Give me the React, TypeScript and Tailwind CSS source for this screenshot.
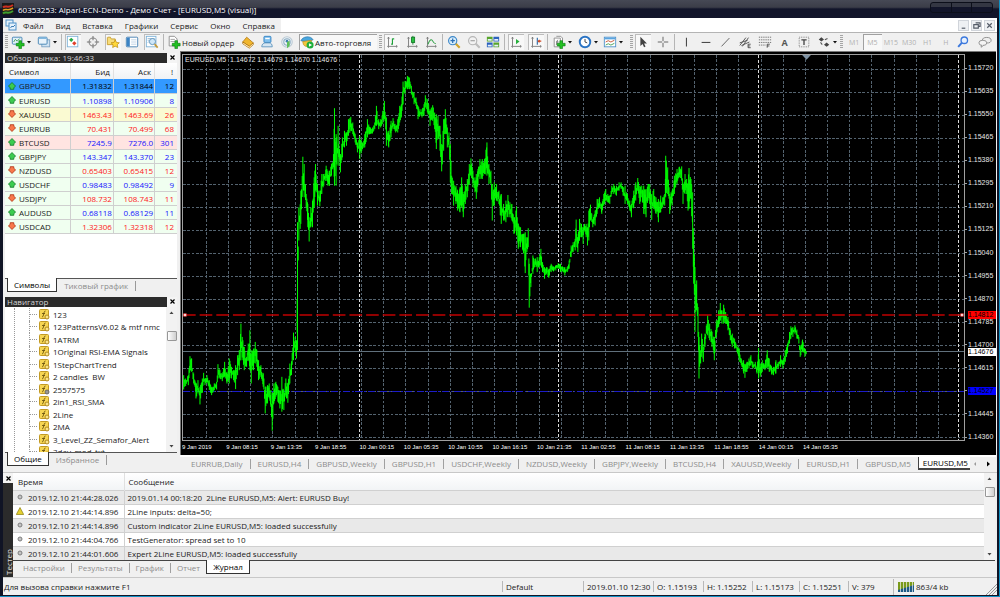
import type { ReactNode } from "react";

type Quote = {
  symbol: string;
  bid: string;
  ask: string;
  spread: string;
  up: boolean;
  row: string;
  text: string;
};

const UP = "text-[#1414ff]";
const DOWN = "text-[#ff2020]";

const quotes: Quote[] = [
  { symbol: "GBPUSD", bid: "1.31832", ask: "1.31844", spread: "12", up: true, row: "bg-[#3399ff]", text: "text-black" },
  { symbol: "EURUSD", bid: "1.10898", ask: "1.10906", spread: "8", up: true, row: "bg-[#f0fff0]", text: UP },
  { symbol: "XAUUSD", bid: "1463.43", ask: "1463.69", spread: "26", up: false, row: "bg-[#fafad2]", text: DOWN },
  { symbol: "EURRUB", bid: "70.431", ask: "70.499", spread: "68", up: false, row: "bg-[#f0fff0]", text: DOWN },
  { symbol: "BTCUSD", bid: "7245.9", ask: "7276.0", spread: "301", up: true, row: "bg-[#ffe4e1]", text: UP },
  { symbol: "GBPJPY", bid: "143.347", ask: "143.370", spread: "23", up: true, row: "bg-[#f0fff0]", text: UP },
  { symbol: "NZDUSD", bid: "0.65403", ask: "0.65415", spread: "12", up: false, row: "bg-[#f0fff0]", text: DOWN },
  { symbol: "USDCHF", bid: "0.98483", ask: "0.98492", spread: "9", up: true, row: "bg-[#f0fff0]", text: UP },
  { symbol: "USDJPY", bid: "108.732", ask: "108.743", spread: "11", up: false, row: "bg-[#f0fff0]", text: DOWN },
  { symbol: "AUDUSD", bid: "0.68118", ask: "0.68129", spread: "11", up: true, row: "bg-[#f0fff0]", text: UP },
  { symbol: "USDCAD", bid: "1.32306", ask: "1.32318", spread: "12", up: false, row: "bg-[#f0fff0]", text: DOWN },
];

const scripts = [
  "123",
  "123PatternsV6.02 & mtf nmc",
  "1ATRM",
  "1Original RSI-EMA Signals",
  "1StepChartTrend",
  "2 candles  BW",
  "2557575",
  "2in1_RSI_SMA",
  "2Line",
  "2MA",
  "3_Level_ZZ_Semafor_Alert",
  "3day_mod_txt",
];

const menu = ["Файл", "Вид", "Вставка", "Графики", "Сервис", "Окно", "Справка"];

const chartTabs = [
  "EURRUB,Daily",
  "EURUSD,H4",
  "GBPUSD,Weekly",
  "GBPUSD,H1",
  "USDCHF,Weekly",
  "NZDUSD,Weekly",
  "GBPJPY,Weekly",
  "BTCUSD,H4",
  "XAUUSD,Weekly",
  "EURUSD,H1",
  "GBPUSD,M5",
];

const prices = [
  "1.15720", "1.15635", "1.15550", "1.15465", "1.15380", "1.15295", "1.15210", "1.15125", "1.15040",
  "1.14955", "1.14870", "1.14785", "1.14700", "1.14615", "1.14527", "1.14445", "1.14360",
];

const times = [
  "9 Jan 2019", "9 Jan 08:15", "9 Jan 13:35", "9 Jan 18:55", "10 Jan 00:15", "10 Jan 05:35", "10 Jan 10:55",
  "10 Jan 16:15", "10 Jan 21:35", "11 Jan 02:55", "11 Jan 08:15", "11 Jan 13:35", "11 Jan 18:55", "14 Jan 00:15",
  "14 Jan 05:35",
];

const journal = [
  { time: "2019.12.10 21:44:28.026", text: "2019.01.14 00:18:20  2Line EURUSD,M5: Alert: EURUSD Buy!", warn: false },
  { time: "2019.12.10 21:44:14.896", text: "2Line inputs: delta=50;", warn: true },
  { time: "2019.12.10 21:44:14.896", text: "Custom indicator 2Line EURUSD,M5: loaded successfully", warn: false },
  { time: "2019.12.10 21:44:04.766", text: "TestGenerator: spread set to 10", warn: false },
  { time: "2019.12.10 21:44:01.606", text: "Expert 2Line EURUSD,M5: loaded successfully", warn: false },
];

// Price envelope: x, high, low
const envelope: number[] = [
  8, 975, 1018, 14, 985, 1008, 22, 975, 1005, 27, 918, 960, 32, 925, 965, 38, 970, 1000, 45, 1000, 1045, 51, 990, 1030,
  57, 1010, 1063, 64, 985, 1028, 68, 968, 995, 72, 985, 1005, 78, 975, 1000, 85, 990, 1020, 92, 1010, 1035,
  100, 1000, 1020, 107, 995, 1018, 111, 942, 985, 117, 960, 985, 124, 970, 993, 131, 935, 980, 138, 965, 1000,
  145, 925, 1000, 152, 950, 985, 158, 960, 990, 164, 945, 1017, 170, 915, 975, 175, 900, 960, 180, 820, 930,
  186, 870, 930, 190, 890, 960, 197, 920, 950, 202, 880, 930, 207, 840, 960, 211, 900, 1000, 218, 895, 960,
  223, 875, 940, 228, 900, 950, 233, 930, 990, 240, 945, 980, 247, 970, 1010, 253, 1010, 1090, 260, 1005, 1060,
  265, 1000, 1045, 270, 1020, 1070, 274, 1030, 1142, 279, 1000, 1060, 285, 995, 1040, 291, 1010, 1055,
  297, 1020, 1075, 303, 980, 1085, 309, 1020, 1080, 315, 985, 1040, 321, 1000, 1058, 327, 940, 1000, 332, 933, 975,
  338, 847, 930, 343, 860, 905, 347, 870, 925, 350, 515, 900, 354, 470, 570, 360, 420, 520, 366, 318, 400,
  370, 340, 440, 376, 430, 470, 381, 460, 530, 385, 500, 573, 390, 470, 530, 395, 450, 530, 400, 380, 470,
  404, 340, 420, 410, 400, 465, 417, 420, 467, 423, 370, 430, 429, 370, 405, 436, 345, 390, 441, 360, 405,
  446, 360, 405, 452, 340, 375, 458, 310, 350, 461, 172, 405, 466, 250, 405, 472, 225, 345, 479, 310, 365,
  485, 260, 320, 491, 240, 290, 497, 245, 285, 503, 205, 255, 510, 198, 240, 516, 215, 250, 523, 250, 275,
  530, 275, 305, 537, 255, 325, 545, 275, 295, 552, 250, 290, 560, 205, 260, 567, 230, 250, 575, 230, 248,
  582, 215, 235, 587, 165, 225, 594, 205, 235, 600, 205, 230, 606, 180, 220, 611, 150, 205, 617, 200, 285,
  624, 240, 290, 631, 210, 260, 637, 202, 235, 645, 225, 245, 651, 205, 245, 657, 165, 215, 662, 160, 200,
  667, 92, 160, 673, 90, 130, 680, 75, 115, 686, 80, 115, 692, 105, 130, 700, 125, 160, 706, 140, 165,
  712, 165, 205, 718, 175, 195, 724, 175, 200, 730, 160, 195, 734, 133, 170, 740, 145, 185, 748, 175, 225,
  756, 163, 210, 762, 185, 235, 767, 190, 295, 772, 195, 265, 778, 225, 300, 783, 280, 362, 789, 205, 300,
  794, 175, 250, 800, 230, 290, 805, 245, 290, 809, 280, 395, 813, 375, 430, 819, 390, 465, 826, 405, 460,
  831, 420, 480, 838, 410, 485, 843, 380, 470, 848, 430, 500, 854, 400, 460, 860, 385, 440, 866, 340, 400,
  871, 323, 370, 877, 360, 410, 883, 380, 425, 887, 370, 445, 892, 355, 400, 898, 325, 385, 905, 325, 385,
  912, 325, 370, 919, 275, 375, 925, 340, 400, 931, 360, 400, 935, 400, 510, 941, 395, 465, 948, 400, 450,
  955, 420, 460, 962, 430, 520, 969, 460, 510, 976, 450, 515, 982, 433, 500, 988, 455, 500, 994, 460, 510,
  1000, 500, 550, 1008, 468, 555, 1013, 520, 595, 1020, 530, 590, 1027, 550, 600, 1034, 545, 668, 1039, 560, 605,
  1043, 533, 590, 1046, 640, 772, 1051, 670, 710, 1057, 615, 670, 1063, 625, 650, 1070, 620, 665, 1076, 620, 650,
  1081, 595, 645, 1086, 635, 665, 1092, 650, 685, 1098, 650, 670, 1105, 655, 682, 1112, 640, 665, 1119, 648, 663,
  1126, 645, 660, 1133, 638, 655, 1140, 640, 665, 1148, 650, 665, 1153, 650, 675, 1160, 650, 665, 1166, 630, 655,
  1172, 585, 620, 1178, 575, 605, 1184, 565, 600, 1187, 507, 590, 1192, 560, 605, 1197, 505, 570, 1203, 520, 560,
  1208, 530, 580, 1212, 520, 540, 1217, 520, 560, 1221, 530, 585, 1225, 480, 570, 1230, 462, 510, 1237, 505, 530,
  1244, 480, 525, 1250, 445, 490, 1257, 440, 470, 1264, 460, 490, 1270, 430, 465, 1276, 415, 450, 1282, 430, 455,
  1288, 435, 460, 1294, 405, 430, 1300, 400, 430, 1308, 405, 435, 1316, 395, 420, 1322, 395, 415, 1328, 410, 435,
  1334, 405, 460, 1341, 430, 460, 1348, 450, 480, 1353, 460, 500, 1360, 420, 470, 1366, 395, 450, 1372, 382, 420,
  1378, 405, 460, 1384, 405, 440, 1390, 405, 490, 1397, 415, 500, 1403, 400, 450, 1408, 400, 460, 1414, 430, 508,
  1420, 415, 475, 1427, 440, 490, 1434, 445, 515, 1441, 435, 485, 1447, 440, 470, 1453, 430, 465, 1456, 315, 440,
  1462, 350, 430, 1468, 430, 490, 1475, 420, 465, 1482, 375, 430, 1490, 355, 400, 1497, 348, 380, 1504, 347, 390,
  1508, 400, 460, 1514, 370, 430, 1519, 385, 430, 1523, 400, 480, 1526, 352, 475, 1532, 385, 445, 1537, 425, 595,
  1540, 560, 700, 1544, 650, 845, 1549, 690, 780, 1553, 770, 860, 1556, 860, 985, 1561, 900, 940, 1564, 850, 920,
  1569, 890, 935, 1574, 850, 890, 1582, 795, 855, 1588, 820, 870, 1595, 845, 890, 1602, 860, 930, 1608, 810, 860,
  1615, 780, 830, 1620, 758, 810, 1625, 780, 820, 1630, 763, 820, 1636, 785, 820, 1643, 800, 840, 1650, 840, 870,
  1656, 850, 890, 1663, 865, 895, 1670, 885, 905, 1677, 895, 935, 1683, 925, 945, 1690, 930, 970, 1694, 945, 983,
  1700, 935, 965, 1706, 925, 955, 1712, 915, 945, 1718, 935, 955, 1725, 935, 955, 1730, 950, 970, 1735, 893, 985,
  1740, 940, 980, 1746, 930, 965, 1754, 940, 960, 1761, 900, 950, 1767, 925, 965, 1774, 950, 973, 1780, 950, 975,
  1787, 930, 970, 1794, 935, 955, 1801, 915, 950, 1808, 930, 955, 1815, 900, 935, 1822, 880, 910, 1828, 845, 880,
  1832, 828, 865, 1838, 830, 860, 1844, 825, 850, 1850, 838, 865, 1856, 860, 880, 1860, 885, 920, 1867, 868, 905,
  1874, 895, 920, 1880, 900, 912,
];

// Bars between two envelope points take a pseudo random slice of the interpolated range
function buildBars() {
  let d = "";
  let seed = 7;
  const rand = () => {
    seed = (seed * 1103515245 + 12345) % 2147483648;
    return seed / 2147483648;
  };
  for (let i = 0; i + 5 < envelope.length; i += 3) {
    const [x0, h0, l0, x1, h1, l1] = envelope.slice(i, i + 6);
    d += `M${x0} ${h0}V${l0}`;
    for (let x = x0 + 2; x < x1; x += 2) {
      const t = (x - x0) / (x1 - x0);
      const hi = h0 + (h1 - h0) * t;
      const lo = l0 + (l1 - l0) * t;
      const range = lo - hi;
      d += `M${x} ${Math.round(hi + rand() * range * 0.45)}V${Math.round(lo - rand() * range * 0.45)}`;
    }
  }
  return d;
}

const bars = buildBars();

function Svg({ children }: { children: ReactNode }) {
  return (
    <svg viewBox="0 0 16 16" className="size-3.5 shrink-0" fill="none" aria-hidden="true">
      {children}
    </svg>
  );
}

const plus = <path d="M9 6.500h3v3h3v3h-3v3H9v-3H6v-3h3z" fill="#22c022" stroke="#0b7d12" strokeWidth=".7" />;
const axes = <path d="M4 2.500v10.500h10M2.800 4 4 2.500 5.200 4M12.600 11.800 14 13l-1.400 1.200M2.500 13H4v1.500" stroke="#777" strokeWidth="1" />;

const icons = {
  newChart: (
    <Svg>
      <rect x="1.500" y="2.500" width="11" height="8" rx="1" fill="#dff0fb" stroke="#3d7fb0" />
      <path d="M3 8l2-3 2 2 3-3" stroke="#3a9a4a" />
      {plus}
    </Svg>
  ),
  profiles: (
    <Svg>
      <rect x="5.500" y="5.500" width="9" height="8" fill="#cfe3f3" stroke="#7a9fc0" />
      <rect x="1.500" y="2.500" width="10" height="8" rx="1" fill="#e8f3fb" stroke="#3d7fb0" />
      <path d="M2 3.500h9" stroke="#7db4dc" strokeWidth="2" />
    </Svg>
  ),
  market: (
    <Svg>
      <rect x="1.500" y="1.500" width="12" height="12" fill="#fff" stroke="#7ab0d6" />
      <path d="M6 3l2.500 2.500L6 8 3.500 5.500z" fill="#22a843" />
      <path d="M9.500 7l2.500 2.500L9.500 12 7 9.500z" fill="#e0402a" />
    </Svg>
  ),
  crosshair: (
    <Svg>
      <circle cx="8" cy="8" r="4.500" stroke="#888" strokeWidth="1.200" />
      <path d="M8 1v5M8 10v5M1 8h5M10 8h5" stroke="#777" strokeWidth="1.200" />
    </Svg>
  ),
  navigator: (
    <Svg>
      <path d="M1.500 3V11h9V4.500H6L5 2.500H2z" fill="#f7dd7b" stroke="#c79b2a" />
      <path d="M10.500 5.500l1.500 3 3.200.400-2.300 2.200.600 3.200-3-1.500-2.900 1.500.500-3.200-2.300-2.200 3.300-.400z" fill="#ffd83a" stroke="#b98a12" strokeWidth=".8" />
    </Svg>
  ),
  terminal: (
    <Svg>
      <rect x="1.500" y="2.500" width="13" height="11" rx="1" fill="#fff" stroke="#3f7bb0" />
      <rect x="2" y="3" width="3.500" height="10" fill="#3b83c4" />
      <path d="M7 5.500h6M7 8h6M7 10.500h6" stroke="#b9cfe3" />
    </Svg>
  ),
  tester: (
    <Svg>
      <rect x="1.500" y="1.500" width="11" height="12" fill="#fff" stroke="#7ab0d6" />
      <path d="M3 4h8M3 6h2M3 9l2-2" stroke="#9abbd6" />
      <circle cx="8.500" cy="7.500" r="3.500" fill="#cfe7f8" stroke="#5a8fb8" />
      <path d="M11 10.500l3.500 4" stroke="#c49a3a" strokeWidth="2" />
    </Svg>
  ),
  order: (
    <Svg>
      <path d="M2.500 1.500h6l3 3v8h-9z" fill="#fff" stroke="#888" />
      <path d="M4 5h5M4 7.500h5" stroke="#999" />
      {plus}
    </Svg>
  ),
  book: (
    <Svg>
      <path d="M2 8l4.500-5.500L14 9l-4.500 4z" fill="#f0b62e" stroke="#b8801a" />
      <path d="M2 8v2l7.500 5L14 11V9l-4.500 4z" fill="#e8a52a" stroke="#a86f10" strokeWidth=".8" />
      <path d="M2.500 9.500l7 4.500 4-3.500" stroke="#fff3cf" />
    </Svg>
  ),
  account: (
    <Svg>
      <rect x="4.500" y="1.500" width="8" height="7" rx="1" fill="#7fc0ee" stroke="#2f7fc0" />
      <path d="M6 4h5" stroke="#fff" strokeWidth="1.500" />
      <path d="M2 13.500c0-3 2-4.500 4-4.500h4.500c2 0 3.500 1.500 3.500 4.500z" fill="#d6e6f2" stroke="#5c93bd" />
    </Svg>
  ),
  signals: (
    <Svg>
      <circle cx="8" cy="8" r="6" fill="#eef3f6" stroke="#b9c9d4" strokeWidth="1.200" />
      <circle cx="8" cy="8" r="3.700" stroke="#8fb0c6" strokeWidth="1.200" />
      <circle cx="8" cy="7" r="1.500" fill="#3f7fae" />
      <path d="M8 8l3-1.500v6L8 15z" fill="#5fbf5a" />
    </Svg>
  ),
  auto: (
    <Svg>
      <path d="M1 6.500C3 1.500 12 0 15 5.500L8 8z" fill="#49a6dd" stroke="#2672a8" strokeWidth=".7" />
      <path d="M3 7.500l10-1.500v5c-2 3-7 3-9 0z" fill="#f3c63d" stroke="#b3871b" strokeWidth=".7" />
      <circle cx="11.500" cy="11.500" r="4" fill="#1fae3c" />
      <path d="M10.200 9.500l3.500 2-3.500 2z" fill="#fff" />
    </Svg>
  ),
  bars: (
    <Svg>
      {axes}
      <path d="M8.500 4v7M8.500 4.500h2M7 10.500h1.500" stroke="#1f9f3a" strokeWidth="1.300" />
    </Svg>
  ),
  candles: (
    <Svg>
      {axes}
      <path d="M9 1v10" stroke="#137a28" />
      <rect x="7.500" y="2.500" width="3.500" height="6" fill="#27c03f" stroke="#137a28" />
    </Svg>
  ),
  line: (
    <Svg>
      {axes}
      <path d="M4.500 10.500C7 4 9 5 10 7s2 3 3.500 3" stroke="#2f9f45" strokeWidth="1.200" />
    </Svg>
  ),
  zoomIn: (
    <Svg>
      <path d="M9.500 9.500l5 5" stroke="#d2a52c" strokeWidth="2.500" />
      <circle cx="6.500" cy="6.500" r="4.700" fill="#d7edfb" stroke="#3d87c8" strokeWidth="1.300" />
      <path d="M4 6.500h5M6.500 4v5" stroke="#2a6fb5" strokeWidth="1.400" />
    </Svg>
  ),
  zoomOut: (
    <Svg>
      <path d="M9.500 9.500l5 5" stroke="#bdbdbd" strokeWidth="2.500" />
      <circle cx="6.500" cy="6.500" r="4.700" fill="#f2f2f2" stroke="#b5b5b5" strokeWidth="1.300" />
      <path d="M4 6.500h5" stroke="#a5a5a5" strokeWidth="1.400" />
    </Svg>
  ),
  tiles: (
    <Svg>
      <path d="M1 2h6.500v5.500H1zM8.500 8.500H15V14H8.500z" fill="#57a52c" />
      <path d="M8.500 2H15v5.500H8.500zM1 8.500h6.500V14H1z" fill="#2b62bd" />
      <path d="M2 4.500h4.500v2H2zM9.500 4.500H14v2H9.500zM2 11h4.500v2H2zM9.500 11H14v2H9.500z" fill="#e6f0fa" />
    </Svg>
  ),
  scroll: (
    <Svg>
      {axes}
      <path d="M8 4.500l4 3-4 3z" fill="#26b03c" />
    </Svg>
  ),
  shift: (
    <Svg>
      {axes}
      <path d="M9.500 3v8" stroke="#2c6ca8" strokeWidth="1.300" />
      <path d="M14 7h-3M12 5.500L10.500 7 12 8.500" stroke="#d0441e" strokeWidth="1.200" />
    </Svg>
  ),
  indicators: (
    <Svg>
      <path d="M2.500 3.500h7v10h-7zM5 1.500h5l2 2V10" fill="#fff" stroke="#888" />
      <path d="M7 5.500c-2 0-1 6-2.500 6M4.500 8h3" stroke="#666" />
      {plus}
    </Svg>
  ),
  clock: (
    <Svg>
      <circle cx="8" cy="8" r="6" fill="#fff" stroke="#2b74c4" strokeWidth="2.200" />
      <path d="M8 4.500V8l2.500 1" stroke="#444" strokeWidth="1.100" />
    </Svg>
  ),
  template: (
    <Svg>
      <rect x="1.500" y="2.500" width="13" height="11" fill="#fff" stroke="#4a8fc9" />
      <path d="M2 4h12" stroke="#5aa5e0" strokeWidth="2" />
      <path d="M3 8l3-1.500 3 1.500 4-2" stroke="#c24a2a" />
      <path d="M3 11.500l3-1.500 3 1.500 4-2" stroke="#3a9a4a" />
    </Svg>
  ),
  cursor: (
    <Svg>
      <path d="M5 2v10.500l2.500-2.300L9.200 14l1.700-.800-1.700-3.600h3.300z" fill="#444" />
    </Svg>
  ),
  cross: (
    <Svg>
      <path d="M8 2v5M8 9v5M2 8h5M9 8h5" stroke="#555" strokeWidth="1" />
    </Svg>
  ),
  vline: (
    <Svg>
      <path d="M8.500 3v10" stroke="#444" strokeWidth="1.200" />
    </Svg>
  ),
  hline: (
    <Svg>
      <path d="M3 8.500h10" stroke="#444" strokeWidth="1.200" />
    </Svg>
  ),
  trend: (
    <Svg>
      <path d="M4 13l9-9.500" stroke="#555" />
    </Svg>
  ),
  channel: (
    <Svg>
      <path d="M2 12L9 3M5 13l7-10M2 9l9-3M4 12l9-4" stroke="#555" strokeWidth="1.100" />
      <path d="M14.500 10.500h-3v4h3M11.500 12.500h2.500" stroke="#333" strokeWidth=".9" />
    </Svg>
  ),
  fibo: (
    <Svg>
      <path d="M1 2.500h14M1 5.500h14M1 8.500h14M1 11.500h8" stroke="#666" strokeDasharray="1.500 1" />
      <path d="M13.500 10.500h-3v4M10.500 12.500h2.500" stroke="#333" strokeWidth=".9" />
    </Svg>
  ),
  label: (
    <Svg>
      <rect x="2.500" y="2.500" width="11" height="11" stroke="#777" strokeDasharray="1 1" />
      <path d="M5 5.500h6M8 5.500v6" stroke="#444" strokeWidth="1.500" />
    </Svg>
  ),
  arrows: (
    <Svg>
      <path d="M2 5l3-2.500L8 5 5 7.500zM8 11l3-2.500 3 2.500-3 2.500z" fill="#444" />
      <path d="M4 8.500L6 11M9 5.500l3-1.500" stroke="#555" strokeWidth="1.200" />
    </Svg>
  ),
  search: (
    <Svg>
      <circle cx="9.500" cy="6" r="3.700" fill="#e8f1fd" stroke="#3b78dd" strokeWidth="1.500" />
      <path d="M6.500 9l-4 4.500" stroke="#3b78dd" strokeWidth="2.200" />
    </Svg>
  ),
  chat: (
    <Svg>
      <ellipse cx="10" cy="6" rx="5" ry="3.200" fill="#eee" stroke="#888" />
      <ellipse cx="5.500" cy="9" rx="4.500" ry="3" fill="#f4f4f4" stroke="#888" />
      <path d="M4 11.500L3.500 14l3-2.300" fill="#f4f4f4" stroke="#888" />
    </Svg>
  ),
};

type IconName = keyof typeof icons;

function Tool({ name, title, pressed, caret }: { name: IconName; title: string; pressed?: boolean; caret?: boolean }) {
  return (
    <button
      type="button"
      title={title}
      aria-label={title}
      className={`flex h-4 shrink-0 items-center ${
        pressed ? "bg-[#f8f8f8] shadow-[inset_1px_1px_0_#bdbdbd]" : ""
      }`}
    >
      <span className="flex w-4 justify-center">{icons[name]}</span>
      {caret && <Caret />}
    </button>
  );
}

function Caret() {
  return (
    <svg viewBox="0 0 6 6" className="size-1.5" aria-hidden="true">
      <path d="M1 2h4L3 4.500z" fill="#111" />
    </svg>
  );
}

function Sep() {
  return (
    <span className="flex w-[7px] shrink-0 justify-center">
      <span className="h-4 w-px bg-[#b5b5b5]" />
    </span>
  );
}

function Grip() {
  return (
    <span className="flex w-[7px] shrink-0 justify-center">
      <span className="h-3.5 w-[3px] bg-[repeating-linear-gradient(#a5a5a5_0_1px,#f0f0f0_1px_2px)]" />
    </span>
  );
}

function Group({ className, children }: { className: string; children: ReactNode }) {
  return <div className={`flex shrink-0 items-center justify-between ${className}`}>{children}</div>;
}

function Toolbar() {
  return (
    <div className="flex h-[19px] shrink-0 items-center border-t border-[#b4b4b4] bg-[#f0f0f0] pr-1">
      <Grip />
      <Group className="w-12">
        <Tool name="newChart" title="Новый график" caret />
        <Tool name="profiles" title="Профили" caret />
      </Group>
      <Sep />
      <Group className="w-[95px]">
        <Tool name="market" title="Обзор рынка" pressed />
        <Tool name="crosshair" title="Окно данных" />
        <Tool name="navigator" title="Навигатор" pressed />
        <Tool name="terminal" title="Терминал" />
        <Tool name="tester" title="Тестер стратегий" pressed />
      </Group>
      <Sep />
      <Group className="w-32">
        <button type="button" className="flex w-[69px] items-center gap-px whitespace-nowrap">
          {icons.order}
          Новый ордер
        </button>
        <Tool name="book" title="MetaEditor" />
        <Tool name="account" title="Счет" />
        <Tool name="signals" title="Сигналы" />
      </Group>
      <button
        type="button"
        className="ml-1 flex h-4 w-[78px] shrink-0 items-center gap-px whitespace-nowrap bg-[#f8f8f8] pl-px shadow-[inset_1px_1px_0_#a0a0a0]"
      >
        {icons.auto}
        Авто-торговля
      </button>
      <Grip />
      <Group className="w-[55px]">
        <Tool name="bars" title="Бары" pressed />
        <Tool name="candles" title="Свечи" />
        <Tool name="line" title="Линия" />
      </Group>
      <Sep />
      <Group className="w-[55px]">
        <Tool name="zoomIn" title="Увеличить" />
        <Tool name="zoomOut" title="Уменьшить" />
        <Tool name="tiles" title="Плитка" />
      </Group>
      <Sep />
      <Group className="w-9">
        <Tool name="scroll" title="Автопрокрутка" pressed />
        <Tool name="shift" title="Сдвиг графика" pressed />
      </Group>
      <Sep />
      <Group className="mr-1 w-[73px]">
        <Tool name="indicators" title="Индикаторы" caret />
        <Tool name="clock" title="Периоды" caret />
        <Tool name="template" title="Шаблоны" caret />
      </Group>
      <Grip />
      <Group className="w-9">
        <Tool name="cursor" title="Курсор" pressed />
        <Tool name="cross" title="Перекрестие" />
      </Group>
      <Sep />
      <Group className="w-40">
        <Tool name="vline" title="Вертикальная линия" />
        <Tool name="hline" title="Горизонтальная линия" />
        <Tool name="trend" title="Трендовая линия" />
        <Tool name="channel" title="Канал" />
        <Tool name="fibo" title="Фибоначчи" />
        <button type="button" className="w-4 text-[9px] font-bold text-[#555]">A</button>
        <Tool name="label" title="Текстовая метка" />
        <Tool name="arrows" title="Стрелки" caret />
      </Group>
      <Grip />
      <div className="flex min-w-0 flex-1 items-center text-[7px] text-[#b0b0b0]">
        {["M1", "M5", "M15", "M30", "H1", "H"].map((tf) => (
          <button
            type="button"
            key={tf}
            className={`h-4 w-[18%] ${tf === "M5" ? "bg-[#f8f8f8] shadow-[inset_1px_1px_0_#a0a0a0]" : ""}`}
          >
            {tf}
          </button>
        ))}
      </div>
      <Group className="w-[38px]">
        <Tool name="search" title="Поиск" />
        <Tool name="chat" title="Чат" />
      </Group>
    </div>
  );
}

function CloseX() {
  return (
    <button type="button" aria-label="Закрыть" className="flex size-[10px] shrink-0 items-center justify-center bg-[#f4f4f4]">
      <svg viewBox="0 0 5 5" className="size-[5px]" aria-hidden="true">
        <path d="M.5.5l4 4M4.500.5l-4 4" stroke="#000" strokeWidth="1.200" />
      </svg>
    </button>
  );
}

function PanelTitle({ children }: { children: ReactNode }) {
  return (
    <div className="flex h-[11px] shrink-0 items-center bg-[#f0f0f0]">
      <h2 className="h-[10px] flex-1 bg-[#2b2b2b] pl-0.5 leading-[10px] text-[#d4d4d4]">{children}</h2>
      <CloseX />
    </div>
  );
}

function PanelTabs({ active, other }: { active: string; other: string }) {
  return (
    <div className="flex h-[14px] shrink-0 items-start border-t border-[#555] bg-[#f0f0f0]">
      <button type="button" className="-mt-px ml-0.5 h-[14px] border-x border-b border-[#333] bg-white px-1.5 text-black">
        {active}
      </button>
      <button type="button" className="h-3 px-[7px] text-[#8c8c8c]">{other}</button>
      <span className="mt-0.5 h-2.5 w-px bg-[#999]" />
    </div>
  );
}

function Scrollbar({ thumb }: { thumb: string }) {
  return (
    <div className="flex w-[11px] shrink-0 flex-col items-center bg-[#f2f2f2]">
      <svg viewBox="0 0 11 12" className="w-[11px]" aria-hidden="true">
        <path d="M3.500 7h4L5.500 4.500z" fill="#444" />
      </svg>
      <span className={`size-[10px] rounded-[1px] border border-[#979797] bg-linear-to-r from-white to-[#cfcfcf] ${thumb}`} />
      <svg viewBox="0 0 11 12" className="mt-auto w-[11px]" aria-hidden="true">
        <path d="M3.500 5h4L5.500 7.500z" fill="#444" />
      </svg>
    </div>
  );
}

function MarketWatch() {
  return (
    <section className="flex min-h-0 flex-1 flex-col">
      <PanelTitle>Обзор рынка: 19:46:33</PanelTitle>
      <div className="flex-1 bg-white">
        <table className="w-full table-fixed border-collapse">
          <colgroup>
            <col className="w-[38%]" />
            <col className="w-[25%]" />
            <col className="w-[24%]" />
            <col />
          </colgroup>
          <thead>
            <tr className="h-4 bg-linear-to-b from-white to-[#f0f2f5]">
              <th className="border-r border-[#e0e0e0] pl-1 text-left font-normal">Символ</th>
              <th className="border-r border-[#e0e0e0] pr-[3px] text-right font-normal">Бид</th>
              <th className="border-r border-[#e0e0e0] pr-[3px] text-right font-normal">Аск</th>
              <th className="pr-1 text-right font-normal">!</th>
            </tr>
          </thead>
          <tbody>
            {quotes.map((q) => (
              <tr key={q.symbol} className={`h-[14px] border-b border-[#cfcfcf] ${q.row}`}>
                <td className="border-r border-[#cfcfcf] pl-[3px]">
                  <span className="flex items-center gap-[3px]">
                    <svg viewBox="0 0 8 8" className="size-2" aria-hidden="true">
                      {q.up ? (
                        <path d="M4 .5L7.600 4.200 5.800 5.600V7.300H2.200V5.600L.4 4.200z" fill="#3ccc50" stroke="#0f7a26" strokeWidth=".8" />
                      ) : (
                        <path d="M4 7.500L.4 3.800 2.200 2.400V.7h3.600v1.700l1.800 1.400z" fill="#f8784a" stroke="#b03010" strokeWidth=".8" />
                      )}
                    </svg>
                    {q.symbol}
                  </span>
                </td>
                <td className={`border-r border-[#cfcfcf] pr-px text-right ${q.text}`}>{q.bid}</td>
                <td className={`border-r border-[#cfcfcf] pr-px text-right ${q.text}`}>{q.ask}</td>
                <td className={`pr-[3px] text-right ${q.text}`}>{q.spread}</td>
              </tr>
            ))}
          </tbody>
        </table>
      </div>
      <PanelTabs active="Символы" other="Тиковый график" />
    </section>
  );
}

function Navigator() {
  return (
    <section className="flex h-[170px] shrink-0 flex-col">
      <PanelTitle>Навигатор</PanelTitle>
      <div className="flex min-h-0 flex-1 bg-white">
        <div className="min-w-0 flex-1 overflow-hidden pt-px pl-[9px]">
          <ul className="grid h-[150px] grid-rows-12 border-l border-dotted border-[#999] pl-[14px]">
            {scripts.map((s, i) => (
              <li key={s} className="flex items-center border-l border-dotted border-[#999] whitespace-pre">
                <span className="mr-0.5 w-[7px] border-t border-dotted border-[#999]" />
                <svg viewBox="0 0 11 11" className="mr-[3px] size-[11px] shrink-0" aria-hidden="true">
                  <rect x=".5" y=".5" width="9" height="9" rx="1" fill="#f6d552" stroke="#c29a24" />
                  <path d="M6.500 2C4.500 1.500 5 8 3 8M3 4.500h3" stroke="#6b5310" strokeWidth=".9" fill="none" />
                  <circle cx="8" cy="8" r="2" fill={i === 6 ? "#999" : "#fbe58a"} stroke={i === 6 ? "#666" : "#a8801a"} strokeWidth=".9" />
                </svg>
                {s}
              </li>
            ))}
          </ul>
        </div>
        <Scrollbar thumb="mt-3" />
      </div>
      <PanelTabs active="Общие" other="Избранное" />
    </section>
  );
}

const gridX = Array.from({ length: 34 }, (_, i) => 76 + i * 66.65);
const gridY = Array.from({ length: 17 }, (_, i) => 56 + i * 69.2);
const days = [535, 1135, 1736, 2336];

function Plot() {
  return (
    <svg viewBox="6 12 2346 1158" preserveAspectRatio="none" className="absolute inset-0 size-full" fill="none">
      <g stroke="#54636f" strokeWidth="3" strokeDasharray="8 5" shapeRendering="crispEdges">
        {gridY.map((y) => (
          <path key={y} d={`M6 ${y}H2352`} />
        ))}
        {gridX.map((x) => (
          <path key={x} d={`M${x} 12V1170`} />
        ))}
      </g>
      <g stroke="#dcdcdc" strokeWidth="3" strokeDasharray="9 6" shapeRendering="crispEdges">
        {days.map((x) => (
          <path key={x} d={`M${x} 12V1170`} />
        ))}
      </g>
      <path d="M6 1024H2352" stroke="#1c1cc8" strokeWidth="3" strokeDasharray="22 5 5 5" shapeRendering="crispEdges" />
      <path d="M6 905H2352" stroke="#60707c" strokeWidth="3" shapeRendering="crispEdges" />
      <path d={bars} stroke="#00ff00" strokeWidth="3" />
      <path d="M6 794H2352" stroke="#c00000" strokeWidth="4" strokeDasharray="38 12" />
      <path d="M8 790h8v8h-8zM2342 790h8v8h-8z" fill="#fff" stroke="#e33" strokeWidth="2" />
      <path d="M1866 12h26l-13 14z" fill="#8094a6" />
    </svg>
  );
}

function Chart() {
  return (
    <section className="flex min-w-0 flex-1 flex-col pb-0.5">
      <div className="flex min-h-0 flex-1 flex-col border-t border-l border-[#777] bg-black pt-0.5 pl-px font-['Liberation_Sans',sans-serif] text-[7px] text-[#e6e6e6]">
        <div className="flex min-h-0 flex-1">
          <div className="relative min-w-0 flex-1 border border-[#a0a0a0]">
            <Plot />
            <p className="relative pl-0.5 leading-[9px] whitespace-pre">EURUSD,M5  1.14672 1.14679 1.14670 1.14676</p>
          </div>
          <div className="relative flex w-[31px] shrink-0 flex-col justify-between pt-2.5 leading-[8px]">
            {prices.map((p) => (
              <span key={p} className="flex items-center gap-px">
                <span className="h-px w-0.5 bg-[#a0a0a0]" />
                <span className={`w-7 ${p === "1.14527" ? "bg-[#0000ff] text-black" : ""}`}>{p}</span>
              </span>
            ))}
            <span className="absolute top-[66.500%] left-[3px] w-7 bg-[#ff0000] text-black">1.14812</span>
            <span className="absolute top-[76%] left-[3px] w-7 bg-white text-black">1.14676</span>
          </div>
        </div>
        <div className="flex h-[14px] shrink-0 overflow-hidden text-[6px] leading-[12px] whitespace-nowrap text-white">
          {times.map((t) => (
            <span key={t} className="w-[5.450%] shrink-0">{t}</span>
          ))}
        </div>
      </div>
      <div className="flex h-[15px] shrink-0 items-center border-t-2 border-white bg-[#f0f0f0] pl-1 text-[#8c8c8c]">
        {chartTabs.map((t) => (
          <button type="button" key={t} className="h-[10px] shrink-0 border-r border-[#a0a0a0] px-[7px] leading-[10px] nth-11:border-r-0">
            {t}
          </button>
        ))}
        <button type="button" className="h-[13px] min-w-0 flex-1 border-b-2 border-l border-[#444] bg-white pl-1 text-left text-black">
          EURUSD,M5
        </button>
        <svg viewBox="0 0 26 10" className="h-[10px] w-[26px] shrink-0" aria-hidden="true">
          <path d="M6 3v4L4 5z" fill="#999" />
          <path d="M17 2.500v5L20 5z" fill="#000" />
        </svg>
      </div>
    </section>
  );
}

function Tester() {
  return (
    <section className="flex h-[105px] shrink-0 border-t border-[#c8c8c8] bg-[#f0f0f0] pr-0.5">
      <div className="flex w-[10px] shrink-0 flex-col">
        <CloseX />
        <h2 className="flex flex-1 rotate-180 items-center justify-start bg-[#2b2b2b] pt-0.5 leading-[9px] text-[#e0e0e0] [writing-mode:vertical-rl]">
          Тестер
        </h2>
      </div>
      <div className="flex min-w-0 flex-1 flex-col">
        <div className="flex min-h-0 flex-1 border-b border-[#444]">
          <table className="h-full flex-1 border-collapse">
            <thead>
              <tr className="h-[17px] bg-linear-to-b from-white to-[#f2f4f6] text-left">
                <th className="w-[111px] border-r border-[#e0e0e0] pl-[5px] font-normal">Время</th>
                <th className="pl-1 font-normal">Сообщение</th>
              </tr>
            </thead>
            <tbody>
              {journal.map((j, i) => (
                <tr key={j.time + j.text} className={`h-[14px] border-t border-[#d0d0d0] ${i % 2 ? "bg-white" : "bg-[#e9e9e9]"}`}>
                  <td className="border-r border-[#d0d0d0] pl-[3px]">
                    <span className="flex items-center gap-1 whitespace-nowrap">
                      <svg viewBox="0 0 8 8" className="size-2" aria-hidden="true">
                        {j.warn ? (
                          <path d="M4 .5L7.700 7.500H.3z" fill="#e3cf2f" stroke="#8a7d12" strokeWidth=".7" />
                        ) : (
                          <circle cx="4" cy="4" r="2" fill="#c4c4c4" stroke="#7d7d7d" />
                        )}
                      </svg>
                      {j.time}
                    </span>
                  </td>
                  <td className="pl-[3px] whitespace-pre">{j.text}</td>
                </tr>
              ))}
            </tbody>
          </table>
          <Scrollbar thumb="mt-0.5" />
        </div>
        <div className="flex h-4 shrink-0 items-start pl-1 text-[#8c8c8c]">
          {["Настройки", "Результаты", "График", "Отчет"].map((t, i) => (
            <button type="button" key={t} className={`mt-0.5 h-[10px] px-1.5 leading-[10px] ${i < 3 ? "border-r border-[#a0a0a0]" : ""}`}>
              {t}
            </button>
          ))}
          <button type="button" className="-mt-px h-[14px] border-x border-b border-[#333] bg-white px-1.5 text-black">
            Журнал
          </button>
        </div>
      </div>
    </section>
  );
}

function StatusBar() {
  const cells = [
    { text: "Default", width: "w-[81px]" },
    { text: "2019.01.10 12:30", width: "w-[70px]" },
    { text: "O: 1.15193", width: "w-[50px]" },
    { text: "H: 1.15252", width: "w-[49px]" },
    { text: "L: 1.15173", width: "w-[47px]" },
    { text: "C: 1.15251", width: "w-[49px]" },
    { text: "V: 379", width: "w-[45px]" },
  ];
  return (
    <footer className="flex h-[18px] shrink-0 items-center border-t border-[#c8c8c8] bg-[#f0f0f0] whitespace-nowrap">
      <span className="flex-1 pl-px">Для вызова справки нажмите F1</span>
      {cells.map((c) => (
        <span key={c.text} className={`shrink-0 border-l border-[#b8b8b8] pl-[3px] ${c.width}`}>
          {c.text}
        </span>
      ))}
      <span className="flex w-[104px] shrink-0 items-center gap-0.5 border-l border-[#b8b8b8] pl-1">
        <svg viewBox="0 0 16 10" className="h-[10px] w-4" aria-hidden="true">
          <path d="M0 0h16v3L0 9z" fill="#7a9a1c" />
          <path d="M0 10V8L16 3v7z" fill="#1d5a86" />
          <path d="M2.500 0v10M5.500 0v10M8.500 0v10M11.500 0v10M14.500 0v10" stroke="#f0f0f0" strokeWidth=".7" />
        </svg>
        863/4 kb
        <svg viewBox="0 0 12 12" className="mt-1 ml-auto size-3" aria-hidden="true">
          <path d="M1 12L12 1M4 12l8-8M7 12l5-5" stroke="#999" />
        </svg>
      </span>
    </footer>
  );
}

export default function App() {
  return (
    <div className="flex h-screen min-h-[400px] flex-col overflow-hidden border-r border-b border-[#1191c4] bg-[#101425] font-['Open_Sans','Noto_Sans',sans-serif] text-[8px] leading-[11px] text-[#1a1a1a]">
      <header className="flex h-[18px] shrink-0 items-center bg-linear-to-b from-[#464955] from-0% via-[#3b3d48] via-40% to-[#12152a] to-50% pr-1.5 pl-0.5 text-white">
        <svg viewBox="0 0 12 12" className="size-3" fill="none" aria-hidden="true">
          <rect width="12" height="12" fill="#1a1a1a" />
          <path d="M1 4.500c3-3 4 1.500 10-2.500" stroke="#d02f22" strokeWidth="2" />
          <path d="M1 7.500c3-3 4 1.500 10-2.500" stroke="#e0a020" strokeWidth="1.600" />
          <path d="M1 10.500c3-3 4 1.500 10-2.500" stroke="#3f9f2f" strokeWidth="2" />
        </svg>
        <h1 className="flex-1 pl-1">60353253: Alpari-ECN-Demo - Демо Счет - [EURUSD,M5 (visual)]</h1>
        <span className="mb-1 flex h-[11px] w-[63px] divide-x divide-[#0c0f1a] rounded-[3px] border border-[#0c0f1a] bg-linear-to-b from-[#343743] from-45% to-[#12152a] to-50%">
          <span className="flex-1" />
          <span className="flex-1" />
          <span className="flex-1" />
        </span>
      </header>

      <div className="mr-0.5 mb-px ml-[3px] flex min-h-0 flex-1 flex-col bg-[#f0f0f0]">
        <nav className="flex h-[14px] shrink-0 items-center bg-white">
          <div className="flex h-full w-[278px] shrink-0 items-center bg-[#f0f0f0] pl-0.5">
            <svg viewBox="0 0 12 12" className="mr-1.5 size-3 shrink-0" fill="none" aria-hidden="true">
              <rect x="1" y="1" width="7" height="6" fill="#e4f1fb" stroke="#4d8fc7" />
              <rect x="4" y="4" width="7" height="7" fill="#e4f1fb" stroke="#4d8fc7" />
              <path d="M5.500 9l1.500-2 1 1 2-2" stroke="#3f7fb7" />
            </svg>
            {menu.map((m) => (
              <button type="button" key={m} className="mr-3 last:mr-0">{m}</button>
            ))}
          </div>
          <div className="ml-auto flex gap-0.5 pr-0.5">
            {["M3 8h4", "M4 2h5v4H7M2 4h5v4H2z", "M2.500 2.500l5 5M7.500 2.500l-5 5"].map((d) => (
              <button type="button" key={d} aria-label="Окно графика" className="size-[11px] border border-[#d0d4da] bg-[#eef0f3]">
                <svg viewBox="0 0 10 10" className="size-[9px]" fill="none" aria-hidden="true">
                  <path d={d} stroke="#555c68" strokeWidth="1.300" />
                </svg>
              </button>
            ))}
          </div>
        </nav>

        <Toolbar />

        <main className="flex min-h-0 flex-1 pr-px">
          <aside className="flex w-[177px] shrink-0 flex-col gap-1 pt-px pb-1.5 pr-[3px] pl-0.5">
            <MarketWatch />
            <Navigator />
          </aside>
          <Chart />
        </main>

        <Tester />
        <StatusBar />
      </div>
    </div>
  );
}
